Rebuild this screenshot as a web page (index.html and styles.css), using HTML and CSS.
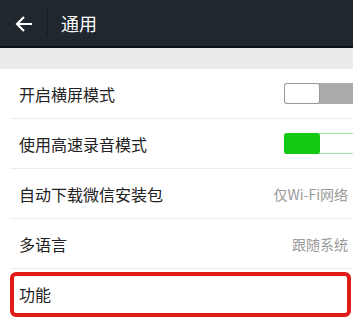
FILE: index.html
```html
<!DOCTYPE html>
<html lang="zh-CN">
<head>
    <meta charset="UTF-8">
    <title>通用</title>
    <link rel="stylesheet" href="styles.css">
</head>
<body>
    <div class="screen">
        <header class="topbar">
            <div class="back">
                <svg width="20" height="20" viewBox="0 0 20 20">
                    <path d="M18 10H3M10 3L3 10L10 17" fill="none" stroke="#fff" stroke-width="2.2"/>
                </svg>
            </div>
            <div class="sep"></div>
            <h1>通用</h1>
        </header>
        <div class="band"></div>
        <div class="list">
            <div class="row">
                <span class="label">开启横屏模式</span>
                <span class="toggle off"><i></i></span>
            </div>
            <div class="row">
                <span class="label">使用高速录音模式</span>
                <span class="toggle on"><i></i></span>
            </div>
            <div class="row">
                <span class="label">自动下载微信安装包</span>
                <span class="value">仅Wi-Fi网络</span>
            </div>
            <div class="row">
                <span class="label">多语言</span>
                <span class="value">跟随系统</span>
            </div>
            <div class="row last">
                <span class="label">功能</span>
                <div class="mark"></div>
            </div>
        </div>
    </div>
</body>
</html>
```

FILE: styles.css
```css
body {
    margin: 0;
    background: #fff;
    font-family: "Noto Sans CJK SC", "Noto Sans", sans-serif;
}
.screen {
    width: 353px;
    height: 330px;
    overflow: hidden;
}
.topbar {
    height: 46px;
    background: #20272e;
    border-bottom: 2px solid #0f1215;
    display: flex;
    align-items: center;
}
.back {
    width: 47px;
    display: flex;
    justify-content: center;
    padding-top: 1px;
}
.sep {
    width: 1px;
    height: 26px;
    background: #171b20;
}
.topbar h1 {
    margin: 0 0 0 13px;
    font-size: 18px;
    font-weight: normal;
    color: #fff;
}
.band {
    height: 21px;
    background: #ebebeb;
}
.row {
    position: relative;
    height: 49px;
    margin-left: 10px;
    padding-left: 9px;
    border-bottom: 1px solid #ececec;
    display: flex;
    align-items: center;
    justify-content: space-between;
}
.row.last {
    border-bottom: none;
}
.label {
    font-size: 16px;
    color: #222;
}
.value {
    font-size: 14px;
    color: #9a9a9a;
    padding-right: 5px;
}
.toggle {
    width: 69px;
    height: 21px;
    display: flex;
    box-sizing: border-box;
}
.toggle i {
    width: 36px;
    height: 100%;
    box-sizing: border-box;
    border-radius: 3px;
}
.toggle.off {
    background: #ababab;
    border-radius: 3px 0 0 3px;
}
.toggle.off i {
    background: #fff;
    border: 1px solid #999;
}
.toggle.on {
    background: #fff;
    border: 1px solid #9ee39e;
    border-right: none;
    border-radius: 3px 0 0 3px;
}
.toggle.on i {
    background: #13c913;
    margin: -1px 0 -1px -1px;
    height: 21px;
}
.mark {
    position: absolute;
    left: 0;
    top: 3px;
    width: 341px;
    height: 45px;
    box-sizing: border-box;
    border: 4px solid #e31a1a;
    border-radius: 6px;
}
```
